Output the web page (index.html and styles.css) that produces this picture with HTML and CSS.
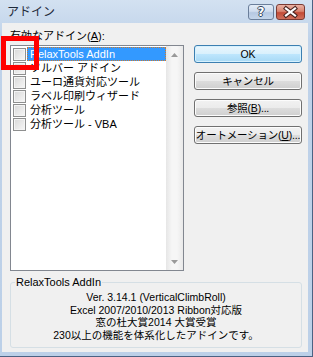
FILE: index.html
```html
<!DOCTYPE html>
<html lang="ja">
<head>
    <meta charset="UTF-8">
    <title>アドイン</title>
    <link rel="stylesheet" href="styles.css">
</head>
<body>
    <div class="window">
        <div class="titlebar">
            <span class="title">アドイン</span>
            <div class="caption-buttons">
                <span class="cap-btn help">?</span>
                <span class="cap-btn close">
                    <svg width="27" height="14" viewBox="0 0 27 14">
                        <path d="M9 3.5 L18 10.5 M18 3.5 L9 10.5" stroke="#4a2420" stroke-width="4.2" stroke-linecap="square"/>
                        <path d="M9 3.5 L18 10.5 M18 3.5 L9 10.5" stroke="#fff" stroke-width="2.2" stroke-linecap="square"/>
                    </svg>
                </span>
            </div>
        </div>

        <div class="client">
            <div class="top">
                <div class="left">
                    <div class="label">有効なアドイン(<u>A</u>):</div>
                    <div class="listbox">
                        <ul class="items">
                            <li class="item selected"><span class="check"></span><span class="name">RelaxTools AddIn</span></li>
                            <li class="item"><span class="check"></span><span class="name">ソルバー アドイン</span></li>
                            <li class="item"><span class="check"></span><span class="name">ユーロ通貨対応ツール</span></li>
                            <li class="item"><span class="check"></span><span class="name">ラベル印刷ウィザード</span></li>
                            <li class="item"><span class="check"></span><span class="name">分析ツール</span></li>
                            <li class="item"><span class="check"></span><span class="name">分析ツール - VBA</span></li>
                        </ul>
                        <div class="scrollbar">
                            <span class="arrow">
                                <svg width="7" height="4" viewBox="0 0 7 4"><polygon points="3.5,0 7,4 0,4" fill="#9a9a9a"/></svg>
                            </span>
                            <span class="arrow">
                                <svg width="7" height="4" viewBox="0 0 7 4"><polygon points="0,0 7,0 3.5,4" fill="#9a9a9a"/></svg>
                            </span>
                        </div>
                    </div>
                </div>
                <div class="buttons">
                    <button class="btn default">OK</button>
                    <button class="btn">キャンセル</button>
                    <button class="btn">参照(<u>B</u>)...</button>
                    <button class="btn">オートメーション(<u>U</u>)...</button>
                </div>
            </div>

            <fieldset class="info">
                <legend>RelaxTools AddIn</legend>
                <p>Ver. 3.14.1 (VerticalClimbRoll)<br>
                Excel 2007/2010/2013 Ribbon対応版<br>
                窓の杜大賞2014 大賞受賞<br>
                230以上の機能を体系化したアドインです。</p>
            </fieldset>
        </div>

        <div class="marker"></div>
    </div>
</body>
</html>
```

FILE: styles.css
```css
* {
    box-sizing: border-box;
}
body {
    margin: 0;
    font-family: "Liberation Sans", "Noto Sans CJK JP", sans-serif;
    font-size: 11px;
    color: #000;
}
.window {
    position: relative;
    width: 313px;
    height: 357px;
    display: flex;
    flex-direction: column;
    background: linear-gradient(#d3e1f1, #bfd2e9 40px, #bcd0e8);
    border-right: 1px solid #4b6283;
    border-bottom: 1px solid #4b6283;
}
.titlebar {
    height: 23px;
    display: flex;
    align-items: flex-start;
    padding: 3px 7px 0 7px;
}
.title {
    font-family: "Noto Sans CJK JP", sans-serif;
    font-size: 12px;
    line-height: 16px;
    color: #1e2a3a;
}
.caption-buttons {
    margin-left: auto;
    display: flex;
    gap: 2px;
    padding-top: 1px;
}
.cap-btn {
    height: 16px;
    border-radius: 3px;
    display: flex;
    align-items: center;
    justify-content: center;
}
.help {
    width: 26px;
    border: 1px solid #6a7e9a;
    background: linear-gradient(#e3ecf7, #cfdcee 45%, #b5c8e2 55%, #c4d5ea);
    color: #fff;
    font-family: "DejaVu Sans", sans-serif;
    font-weight: bold;
    font-size: 12px;
    line-height: 12px;
    text-shadow: 1px 0 0 #33445c, -1px 0 0 #33445c, 0 1px 0 #33445c, 0 -1px 0 #33445c;
}
.close {
    width: 29px;
    border: 1px solid #7a3a33;
    background: linear-gradient(#eab1a3, #d98470 45%, #c34a36 55%, #d0705c);
}
.client {
    flex: 1;
    margin: 0 4px 4px 2px;
    background: #f0f0f0;
    padding: 6px 6px 0 8px;
}
.top {
    display: flex;
    gap: 10px;
}
.left {
    width: 174px;
}
.label {
    line-height: 14px;
    margin-bottom: 2px;
}
.listbox {
    height: 226px;
    border: 1px solid #828790;
    background: #fff;
    display: flex;
}
.items {
    flex: 1;
    list-style: none;
    margin: 0;
    padding: 1px 0 0 0;
}
.item {
    height: 14px;
    display: flex;
    align-items: center;
}
.check {
    width: 13px;
    height: 13px;
    margin-left: 2px;
    border: 1px solid #8e8f8f;
    background: linear-gradient(135deg, #d8d8d8, #f7f7f7);
    box-shadow: inset 0 0 0 1px #f4f4f4;
}
.name {
    flex: 1;
    margin-left: 1px;
    padding: 0 2px;
    line-height: 12px;
    border: 1px solid transparent;
    white-space: nowrap;
}
.selected .name {
    background: #3399ff;
    color: #fff;
    border: 1px dotted #cc7a2e;
}
.scrollbar {
    width: 17px;
    display: flex;
    flex-direction: column;
    justify-content: space-between;
    background: linear-gradient(to right, #e6e6e6, #f6f6f6 35%, #f6f6f6 65%, #e9e9e9);
}
.arrow {
    height: 17px;
    display: flex;
    align-items: center;
    justify-content: center;
}
.buttons {
    width: 108px;
    margin-top: 16px;
    display: flex;
    flex-direction: column;
    gap: 9px;
}
.btn {
    height: 18px;
    padding: 0;
    font-family: inherit;
    font-size: 10.5px;
    letter-spacing: -0.2px;
    line-height: 14px;
    white-space: nowrap;
    color: #000;
    border: 1px solid #707070;
    border-radius: 3px;
    background: linear-gradient(#f2f2f2, #ebebeb 50%, #dddddd 50%, #cfcfcf);
    box-shadow: inset 0 0 0 1px #fcfcfc;
}
.btn.default {
    border-color: #3c7fb1;
    background: linear-gradient(#eaf6fd, #d9f0fc 50%, #bee6fd 50%, #a7d9f5);
    box-shadow: inset 0 0 0 1px #d6f1fe;
}
.info {
    margin: 4px 0 0 0;
    width: 292px;
    height: 73px;
    padding: 0 4px;
    border: 1px solid #d5dfe5;
    border-radius: 3px;
}
.info legend {
    padding: 0 1px;
    line-height: 14px;
}
.info p {
    margin: 2px 0 0 0;
    text-align: center;
    font-size: 10.5px;
    line-height: 12.5px;
}
.marker {
    position: absolute;
    left: 1px;
    top: 36px;
    width: 38px;
    height: 34px;
    border: 5px solid #ff0000;
}
```
